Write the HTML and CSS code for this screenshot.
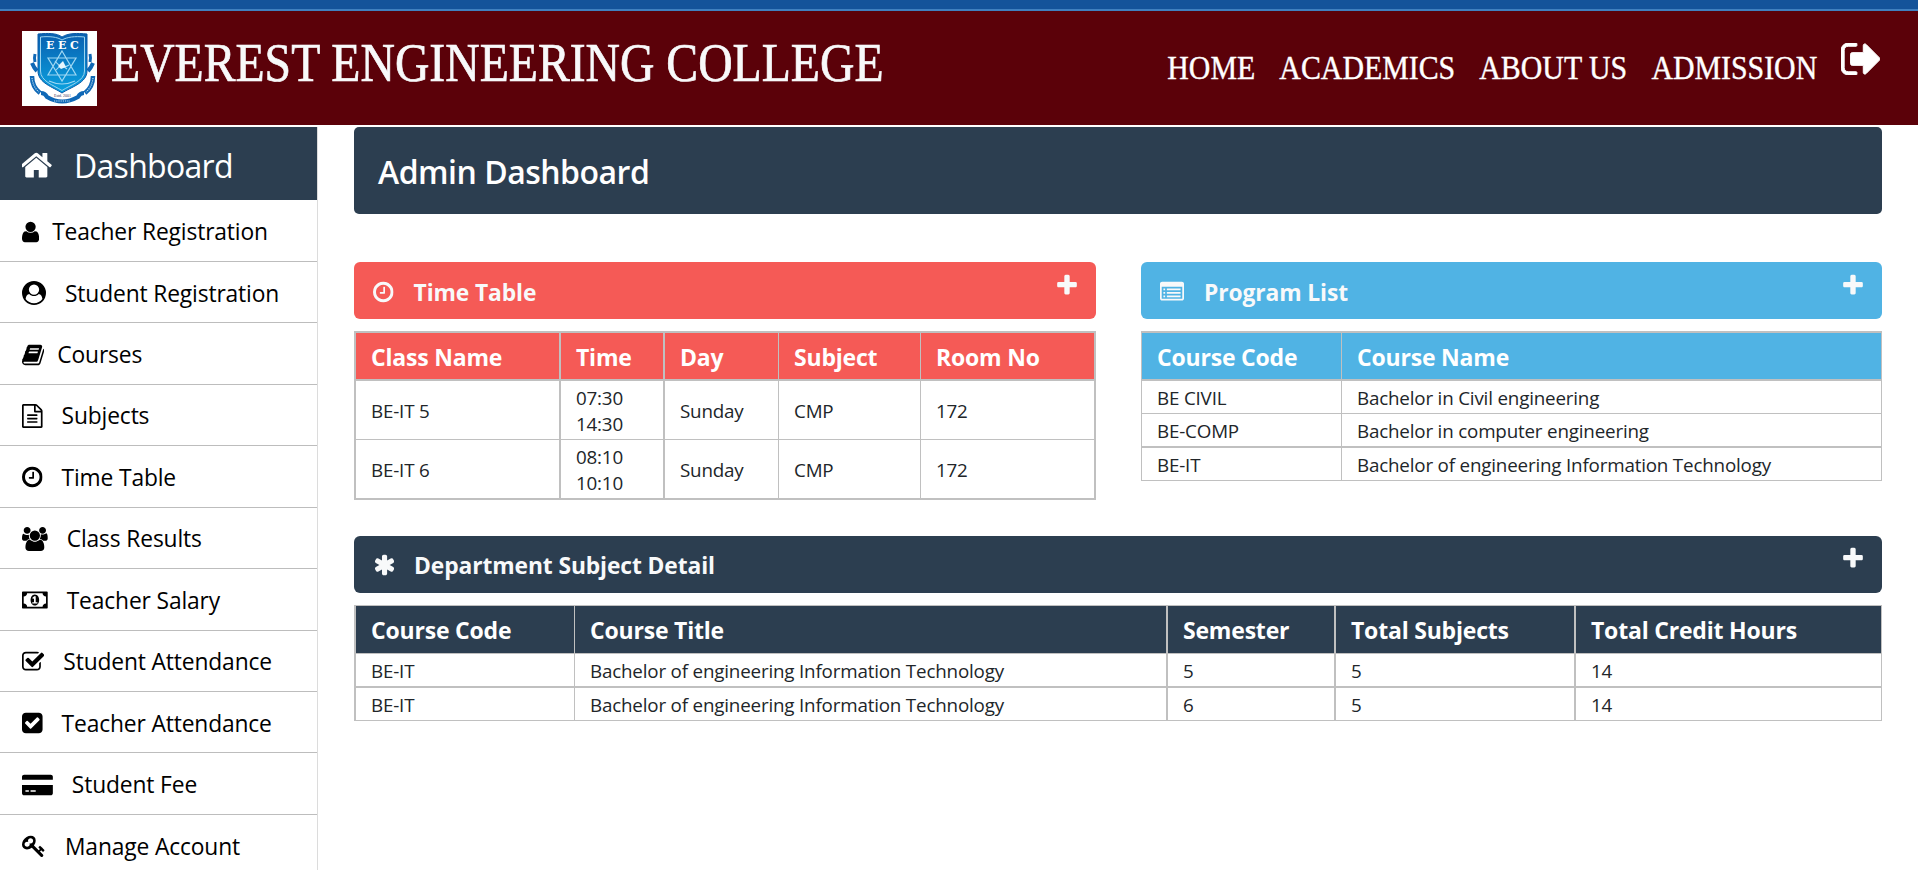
FILE: index.html
```html
<!DOCTYPE html>
<html lang="en">
<head>
<meta charset="utf-8">
<title>Everest Engineering College</title>
<link rel="stylesheet" href="styles.css">
</head>
<body>
<svg class="defs" width="0" height="0">
<symbol id="plus" viewBox="192 0 1408 1792"><path d="M1600 736v192q0 40-28 68t-68 28h-416v416q0 40-28 68t-68 28h-192q-40 0-68-28t-28-68v-416h-416q-40 0-68-28t-28-68v-192q0-40 28-68t68-28h416v-416q0-40 28-68t68-28h192q40 0 68 28t28 68v416h416q40 0 68 28t28 68z"/></symbol>
<symbol id="clock" viewBox="128 0 1536 1792"><path d="M1024 544v448q0 14-9 23t-23 9h-320q-14 0-23-9t-9-23v-64q0-14 9-23t23-9h224v-352q0-14 9-23t23-9h64q14 0 23 9t9 23zm416 352q0-148-73-273t-198-198-273-73-273 73-198 198-73 273 73 273 198 198 273 73 273-73 198-198 73-273zm224 0q0 209-103 385.5t-279.5 279.5-385.5 103-385.5-103-279.5-279.5-103-385.5 103-385.5 279.5-279.5 385.5-103 385.5 103 279.5 279.5 103 385.5z"/></symbol>
</svg>
<div class="topbar"></div>
<header class="header">
  <svg class="logo" viewBox="0 0 75 75">
    <defs><linearGradient id="sh" x1="0" y1="0" x2="0" y2="1"><stop offset="0" stop-color="#0a5fb0"/><stop offset="1" stop-color="#0aa3e0"/></linearGradient></defs>
    <rect width="75" height="75" fill="#fff"/>
    <g fill="none" stroke="#0f68b6" stroke-width="4">
      <path d="M13 23q-1 4 0 8M68 23q1 4 0 8" stroke-width="3"/>
      <path d="M10 32q2 5 5 8M71 32q-2 5-5 8"/>
      <path d="M10 45q0 11 8 17M71 45q0 11-8 17" stroke-width="4.500"/>
      <path d="M19 62q4 0 6 4 15 9 31 0 2-4 6-4"/>
    </g>
    <path d="M16 3c10-1 19-1 24 3 6-4 15-4 25-3v37c0 12-16 16-25 22-9-6-24-10-24-22z" fill="url(#sh)" stroke="#0b5aa8" stroke-width="1"/>
    <path d="M18.500 6c9-1 17 0 21.500 3 5-3 13-4 22.500-3v34c0 10-14 14-22.500 19.500-9-5.500-21.500-9.500-21.500-19.500z" fill="none" stroke="#9bd3f0" stroke-width="1"/>
    <g fill="none" stroke="#9fd8f3" stroke-width="1.200">
      <path d="M40 20l14 24H26zM40 50L26 27h28z"/><path d="M33 30q7 9 14 4M34 39q5-7 11-1M27 50q13 6 26 0"/>
    </g>
    <path d="M36 35l5-5 3 6-5 2z" fill="#e6f6fd"/>
    <g stroke="#bfe2f4" stroke-width="1.200" stroke-dasharray="1.200 1" fill="none"><path d="M10 47q1 9 7 14M71 47q-1 9-7 14M32 70h16"/></g>
    <g class="logo-letters"><text x="24" y="18">E</text><text x="36" y="18">E</text><text x="48" y="18">C</text></g>
    <text class="logo-date" x="32" y="66">Estd. 2001</text>
  </svg>
  <h1 class="brand">EVEREST ENGINEERING COLLEGE</h1>
  <nav class="nav">
    <div class="links"><a>HOME</a><a>ACADEMICS</a><a>ABOUT US</a><a>ADMISSION</a></div>
    <svg class="signout" viewBox="64 256 1568 1280"><path d="M704 1440q0 4 1 20t.5 26.500-3 23.500-10 19.500-20.500 6.500h-320q-119 0-203.500-84.500t-84.500-203.500v-704q0-119 84.500-203.500t203.500-84.500h320q13 0 22.500 9.500t9.500 22.500q0 4 1 20t.5 26.500-3 23.500-10 19.500-20.500 6.500h-320q-66 0-113 47t-47 113v704q0 66 47 113t113 47h312l11.500 1 11.500 3 8 5.500 7 9 2 13.500zm928-544q0 26-19 45l-544 544q-19 19-45 19t-45-19-19-45v-288h-448q-26 0-45-19t-19-45v-384q0-26 19-45t45-19h448v-288q0-26 19-45t45-19 45 19l544 544q19 19 19 45z"/></svg>
  </nav>
</header>
<div class="layout">
  <aside class="sidebar">
    <div class="side-head"><svg viewBox="89 0 1613 1792" class="home"><path d="M1408 992v480q0 26-19 45t-45 19h-384v-384h-256v384h-384q-26 0-45-19t-19-45v-480q0-1 .5-3t.5-3l575-474 575 474q1 2 1 6zm223-69l-62 74q-8 9-21 11h-3q-13 0-21-7l-692-577-692 577q-12 8-24 7-13-2-21-11l-62-74q-8-10-7-23.500t11-21.500l719-599q32-26 76-26t76 26l244 204v-195q0-14 9-23t23-9h192q14 0 23 9t9 23v408l219 182q10 8 11 21.500t-7 23.500z"/></svg><span>Dashboard</span></div>
    <a class="item tight"><svg viewBox="256 0 1280 1792"><path d="M1536 1399q0 109-62.500 187t-150.500 78h-854q-88 0-150.500-78t-62.500-187q0-85 8.500-160.500t31.500-152 58.500-131 94-89 134.500-34.500q131 128 313 128t313-128q76 0 134.500 34.500t94 89 58.500 131 31.500 152 8.500 160.500zm-256-887q0 159-112.500 271.500t-271.500 112.500-271.500-112.500-112.500-271.500 112.500-271.500 271.500-112.500 271.500 112.500 112.500 271.500z"/></svg><span>Teacher Registration</span></a>
    <a class="item"><svg viewBox="0 0 1792 1792"><path fill-rule="evenodd" d="M1523 1339q-22-155-87.500-257.500t-184.500-118.500q-67 74-159.500 115.500t-195.500 41.500-195.500-41.500-159.500-115.500q-119 16-184.500 118.500t-87.500 257.500q106 150 271 237.500t356 87.500 356-87.500 271-237.500zm-243-699q0-159-112.500-271.500t-271.500-112.500-271.500 112.500-112.500 271.500 112.500 271.500 271.500 112.500 271.500-112.500 112.500-271.500zm512 256q0 182-71 347.500t-190.500 286-285.500 191.500-349 71-349-71-285.500-191.500-190.500-286-71-347.500 71-348 191-286 286-191 348-71 348 71 286 191 191 286 71 348z"/></svg><span>Student Registration</span></a>
    <a class="item tight"><svg viewBox="64 0 1664 1792"><path d="M1703 478q40 57 18 129l-275 906q-19 64-76.500 107.500t-122.500 43.500h-923q-77 0-148.500-53.500t-99.500-131.500q-24-67-2-127 0-4 3-27t4-37q1-8-3-21.500t-3-19.500q2-11 8-21t16.500-23.500 16.500-23.500q23-38 45-91.500t30-91.500q3-10 .5-30t-.5-28q3-11 17-28t17-23q21-36 42-92t25-90q1-9-2.500-32t.5-28q4-13 22-30.500t22-22.500q19-26 42.500-84.500t27.500-96.500q1-8-3-25.500t-2-26.500q2-8 9-18t18-23 17-21q8-12 16.500-30.500t15-35 16-36 19.500-32 26.500-23.500 36-11.500 47.500 5.500l-1 3q38-9 51-9h761q74 0 114 56t18 130l-274 906q-36 119-71.500 153.500t-128.500 34.500h-869q-27 0-38 15-11 16-1 43 24 70 144 70h923q29 0 56-15.500t35-41.500l300-987q7-22 5-57 38 15 59 43zm-1064 2q-4 13 2 22.500t20 9.500h608q13 0 25.500-9.500t16.500-22.500l21-64q4-13-2-22.500t-20-9.500h-608q-13 0-25.500 9.500t-16.500 22.500zm-83 256q-4 13 2 22.500t20 9.500h608q13 0 25.500-9.500t16.500-22.500l21-64q4-13-2-22.500t-20-9.500h-608q-13 0-25.500 9.500t-16.500 22.500z"/></svg><span>Courses</span></a>
    <a class="item"><svg viewBox="128 0 1536 1792"><path d="M1596 380q28 28 48 76t20 88v1152q0 40-28 68t-68 28h-1344q-40 0-68-28t-28-68v-1600q0-40 28-68t68-28h896q40 0 88 20t76 48zm-444-244v376h376q-10-29-22-41l-313-313q-12-12-41-22zm384 1528v-1024h-416q-40 0-68-28t-28-68v-416h-768v1536h1280zm-1024-864q0-14 9-23t23-9h704q14 0 23 9t9 23v64q0 14-9 23t-23 9h-704q-14 0-23-9t-9-23v-64zm736 224q14 0 23 9t9 23v64q0 14-9 23t-23 9h-704q-14 0-23-9t-9-23v-64q0-14 9-23t23-9h704zm0 256q14 0 23 9t9 23v64q0 14-9 23t-23 9h-704q-14 0-23-9t-9-23v-64q0-14 9-23t23-9h704z"/></svg><span>Subjects</span></a>
    <a class="item"><svg viewBox="128 0 1536 1792"><use href="#clock" x="128" width="1536" height="1792"/></svg><span>Time Table</span></a>
    <a class="item"><svg viewBox="64 0 1920 1792"><path d="M657 896q-162 5-265 128h-134q-82 0-138-40.500t-56-118.500q0-353 124-353 6 0 43.500 21t97.500 42.500 119 21.500q67 0 133-23-5 37-5 66 0 159 81 294zm1071 637q0 120-73 189.500t-194 69.500h-874q-121 0-194-69.500t-73-189.500q0-53 3.500-103.500t14-109 26.500-108.500 43-97.500 62-81 85.500-53.500 111.500-20q10 0 43 21.500t73 48 107 48 135 21.500 135-21.500 107-48 73-48 43-21.500q61 0 111.500 20t85.500 53.500 62 81 43 97.500 26.500 108.500 14 109 3.500 103.500zm-1024-1277q0 106-75 181t-181 75-181-75-75-181 75-181 181-75 181 75 75 181zm704 384q0 159-112.500 271.500t-271.500 112.500-271.500-112.500-112.500-271.500 112.500-271.500 271.500-112.500 271.500 112.500 112.500 271.500zm576 225q0 78-56 118.500t-138 40.500h-134q-103-123-265-128 81-135 81-294 0-29-5-66 66 23 133 23 59 0 119-21.500t97.500-42.500 43.500-21q124 0 124 353zm-128-609q0 106-75 181t-181 75-181-75-75-181 75-181 181-75 181 75 75 181z"/></svg><span>Class Results</span></a>
    <a class="item"><svg viewBox="0 0 1920 1792"><path fill-rule="evenodd" d="M768 1152h384v-96h-128v-448h-114l-148 137 77 80q42-37 55-57h2v288h-128v96zm512-256q0 70-21 142t-59.500 134-101.500 101-138 39-138-39-101.500-101-59.500-134-21-142 21-142 59.500-134 101.500-101 138-39 138 39 101.500 101 59.500 134 21 142zm512 256v-512q-106 0-181-75t-75-181h-1152q0 106-75 181t-181 75v512q106 0 181 75t75 181h1152q0-106 75-181t181-75zm128-832v1152q0 26-19 45t-45 19h-1792q-26 0-45-19t-19-45v-1152q0-26 19-45t45-19h1792q26 0 45 19t19 45z"/></svg><span>Teacher Salary</span></a>
    <a class="item"><svg viewBox="64 0 1664 1792"><path d="M1472 930v318q0 119-84.500 203.500t-203.500 84.500h-832q-119 0-203.500-84.500t-84.500-203.500v-832q0-119 84.500-203.500t203.500-84.500h832q63 0 117 25 15 7 18 23 3 17-9 29l-49 49q-10 10-23 10-3 0-9-2-23-6-45-6h-832q-66 0-113 47t-47 113v832q0 66 47 113t113 47h832q66 0 113-47t47-113v-254q0-13 9-22l64-64q10-10 23-10 6 0 12 3 20 8 20 29zm231-489l-814 814q-24 24-57 24t-57-24l-430-430q-24-24-24-57t24-57l110-110q24-24 57-24t57 24l263 263 647-647q24-24 57-24t57 24l110 110q24 24 24 57t-24 57z"/></svg><span>Student Attendance</span></a>
    <a class="item"><svg viewBox="128 0 1536 1792"><path fill-rule="evenodd" d="M813 1299l614-614q19-19 19-45t-19-45l-102-102q-19-19-45-19t-45 19l-467 467-211-211q-19-19-45-19t-45 19l-102 102q-19 19-19 45t19 45l358 358q19 19 45 19t45-19zm851-883v960q0 119-84.500 203.500t-203.500 84.500h-960q-119 0-203.500-84.500t-84.500-203.500v-960q0-119 84.500-203.500t203.500-84.500h960q119 0 203.500 84.500t84.500 203.500z"/></svg><span>Teacher Attendance</span></a>
    <a class="item"><svg viewBox="0 0 2304 1792"><path fill-rule="evenodd" d="M0 1504v-608h2304v608q0 66-47 113t-113 47h-1984q-66 0-113-47t-47-113zm640-224v128h384v-128h-384zm-384 0v128h256v-128h-256zm1888-1152q66 0 113 47t47 113v224h-2304v-224q0-66 47-113t113-47h1984z"/></svg><span>Student Fee</span></a>
    <a class="item"><svg viewBox="0 0 1792 1792"><path d="M832 512q0-80-56-136t-136-56-136 56-56 136q0 42 19 83-41-19-83-19-80 0-136 56t-56 136 56 136 136 56 136-56 56-136q0-42-19-83 41 19 83 19 80 0 136-56t56-136zm851 704q0 17-49 66t-66 49q-9 0-28.500-16t-36.500-33-38.500-40-24.500-26l-96 96 220 220q28 28 28 68 0 42-39 81t-81 39q-40 0-68-28l-671-671q-176 131-365 131-163 0-265.500-102.500t-102.500-265.500q0-160 95-313t248-248 313-95q163 0 265.500 102.500t102.500 265.500q0 189-131 365l355 355 96-96q-3-3-26-24.500t-40-38.500-33-36.500-16-28.500q0-17 49-66t66-49q13 0 23 10 6 6 46 44.500t82 79.500 86.500 86 73 78 28.500 41z"/></svg><span>Manage Account</span></a>
  </aside>
  <main class="main">
    <div class="banner">Admin Dashboard</div>
    <div class="pair">
      <section>
        <div class="card-head red"><svg class="ci" viewBox="128 0 1536 1792"><use href="#clock" x="128" width="1536" height="1792"/></svg><span>Time Table</span><svg class="add"><use href="#plus"/></svg></div>
        <table class="tbl timetable">
          <colgroup><col class="w205"><col class="w104"><col class="w114"><col class="w142"><col class="w175"></colgroup>
          <tr><th>Class Name</th><th>Time</th><th>Day</th><th>Subject</th><th>Room No</th></tr>
          <tr><td>BE-IT 5</td><td>07:30<br>14:30</td><td>Sunday</td><td>CMP</td><td>172</td></tr>
          <tr><td>BE-IT 6</td><td>08:10<br>10:10</td><td>Sunday</td><td>CMP</td><td>172</td></tr>
        </table>
      </section>
      <section>
        <div class="card-head blue"><svg class="ci" viewBox="0 0 1792 1792"><path fill-rule="evenodd" d="M160 128h1472q66 0 113 47t47 113v1088q0 66-47 113t-113 47h-1472q-66 0-113-47t-47-113v-1088q0-66 47-113t113-47zM128 512v864q0 32 32 32h1472q32 0 32-32v-864zM256 640h128v128h-128zM256 896h128v128h-128zM256 1152h128v128h-128zM512 640h1024v128h-1024zM512 896h1024v128h-1024zM512 1152h1024v128h-1024z"/></svg><span>Program List</span><svg class="add"><use href="#plus"/></svg></div>
        <table class="tbl programs">
          <colgroup><col class="w200"><col class="w540"></colgroup>
          <tr><th>Course Code</th><th>Course Name</th></tr>
          <tr><td>BE CIVIL</td><td>Bachelor in Civil engineering</td></tr>
          <tr><td>BE-COMP</td><td>Bachelor in computer engineering</td></tr>
          <tr><td>BE-IT</td><td>Bachelor of engineering Information Technology</td></tr>
        </table>
      </section>
    </div>
    <section>
      <div class="card-head dark"><svg class="ci" viewBox="183 0 1426 1792"><path d="M1546 1050q46 26 59.500 77.500t-12.500 97.500l-64 110q-26 46-77.500 59.500t-97.500-12.500l-266-153v307q0 52-38 90t-90 38h-128q-52 0-90-38t-38-90v-307l-266 153q-46 26-97.500 12.500t-77.500-59.500l-64-110q-26-46-12.500-97.500t59.500-77.500l266-154-266-154q-46-26-59.500-77.500t12.500-97.500l64-110q26-46 77.500-59.500t97.500 12.500l266 153v-307q0-52 38-90t90-38h128q52 0 90 38t38 90v307l266-153q46-26 97.500-12.500t77.500 59.500l64 110q26 46 12.500 97.500t-59.500 77.500l-266 154z"/></svg><span>Department Subject Detail</span><svg class="add"><use href="#plus"/></svg></div>
      <table class="tbl subjects">
        <colgroup><col class="w219"><col class="w593"><col class="w168"><col class="w240"><col class="w306"></colgroup>
        <tr><th>Course Code</th><th>Course Title</th><th>Semester</th><th>Total Subjects</th><th>Total Credit Hours</th></tr>
        <tr><td>BE-IT</td><td>Bachelor of engineering Information Technology</td><td>5</td><td>5</td><td>14</td></tr>
        <tr><td>BE-IT</td><td>Bachelor of engineering Information Technology</td><td>6</td><td>5</td><td>14</td></tr>
      </table>
    </section>
  </main>
</div>
</body>
</html>
```
FILE: styles.css
```css
* { box-sizing: border-box; }
body { margin: 0; height: 870px; overflow: hidden; background: #fff; color: #212529; font-family: "Open Sans", "Noto Sans", sans-serif; }
.defs { position: absolute; }
svg { fill: currentColor; flex: none; }
.topbar { height: 11px; background: #14539a; border-bottom: 2px solid #4080bf; }
.header { height: 114px; padding: 20px 38px 0 22px; display: flex; align-items: flex-start; background: #5b0109; color: #f8f9fa; font-family: "Liberation Serif", serif; }
.logo { width: 75px; height: 75px; }
.logo-letters { font: bold 11px "DejaVu Serif", serif; fill: #fff; }
.logo-date { font: 4px "Liberation Serif", serif; fill: #335; }
.brand { width: 772px; margin: 0 0 0 14px; font-size: 54px; line-height: 65px; font-weight: 400; -webkit-text-stroke: .7px; white-space: nowrap; transform: scaleX(.883); transform-origin: 0 0; }
.nav { margin-left: auto; display: flex; gap: 24px; color: #fff; -webkit-text-stroke: .4px; white-space: nowrap; }
.links { display: flex; gap: 27.500px; padding-top: 13px; font-size: 34px; line-height: 48px; transform: scaleX(.878); transform-origin: 100% 0; }
.signout { width: 39px; height: 32px; margin-top: 12px; stroke: #fff; stroke-width: 40; }
.layout { display: flex; padding-top: 2px; }
.sidebar { width: 318px; height: 743px; border-right: 1px solid #dcdcdc; overflow: hidden; color: #000; }
.side-head { height: 73.45px; padding: 3px 0 0 22px; display: flex; align-items: center; gap: 21px; background: #2c3e50; color: #fff; font-size: 32px; letter-spacing: -.7px; }
.home { width: 31px; height: 34.4px; }
.item { height: 61.45px; padding: 2px 0 0 22px; display: flex; align-items: center; gap: 19px; border-bottom: 1px solid #bdbdbd; font-size: 22.800px; letter-spacing: -.14px; white-space: nowrap; }
.item svg { height: 24px; }
.tight { gap: 13px; }
.main { flex: 1; padding: 0 36px; }
.banner { height: 87px; padding: 2px 0 0 24px; display: flex; align-items: center; border-radius: 5px; background: #2c3e50; color: #fff; font-size: 32px; font-weight: 600; letter-spacing: -.5px; }
.pair { display: grid; grid-template-columns: 742px 741px; justify-content: space-between; padding-top: 48px; height: 322px; }
.card-head { height: 57px; padding: 3px 19px 0; display: flex; align-items: center; gap: 20px; border-radius: 6px; color: #f8f9fa; font-size: 22.800px; font-weight: 700; letter-spacing: -.1px; }
.ci { height: 24px; }
.add { width: 20px; height: 25px; margin: 0 0 14px auto; }
.red { background: #f55a56; }
.blue { background: #50b3e4; }
.dark { padding-top: 1px; padding-left: 21px; background: #2c3e50; }
.tbl { margin-top: 12px; table-layout: fixed; border-collapse: separate; border-spacing: 0; width: 100%; border: 0 solid #c0c0c0; }
.tbl th, .tbl td { padding: 2px 0 0 15px; border: 0 solid #c0c0c0; border-width: 0 1px 1px 0; text-align: left; vertical-align: middle; white-space: nowrap; }
.tbl th { height: 48px; color: #fff; font-size: 23px; line-height: 32px; letter-spacing: -.2px; }
.tbl td { font-size: 18.800px; line-height: 26px; letter-spacing: -.18px; }
.w205 { width: 205px; } .w104 { width: 104px; } .w114 { width: 114px; } .w142 { width: 142px; } .w175 { width: 175px; }
.w200 { width: 200px; } .w540 { width: 540px; }
.w219 { width: 219px; } .w593 { width: 593px; } .w168 { width: 168px; } .w240 { width: 240px; } .w306 { width: 306px; }
.timetable { border-width: 2px 0 0 2px; }
.timetable th { background: #f55a56; border-bottom-width: 2px; }
.timetable td { height: 59px; }
.timetable tr:last-child td { height: 60px; border-bottom-width: 2px; }
.timetable tr > :nth-child(-n+2), .timetable tr > :last-child { border-right-width: 2px; }
.programs { border-width: 2px 0 0 1px; }
.programs th { background: #50b3e4; border-bottom-width: 2px; }
.programs td { height: 33px; }
.programs tr:nth-child(3) td { height: 34px; border-bottom-width: 2px; }
.subjects { border-width: 1px 0 0 2px; }
.subjects th { padding-top: 1px; background: #2c3e50; }
.subjects td { height: 33px; }
.subjects tr:nth-child(2) td { height: 34px; border-bottom-width: 2px; }
.subjects tr > :nth-child(2), .subjects tr > :nth-child(3), .subjects tr > :nth-child(4) { border-right-width: 2px; }
```
